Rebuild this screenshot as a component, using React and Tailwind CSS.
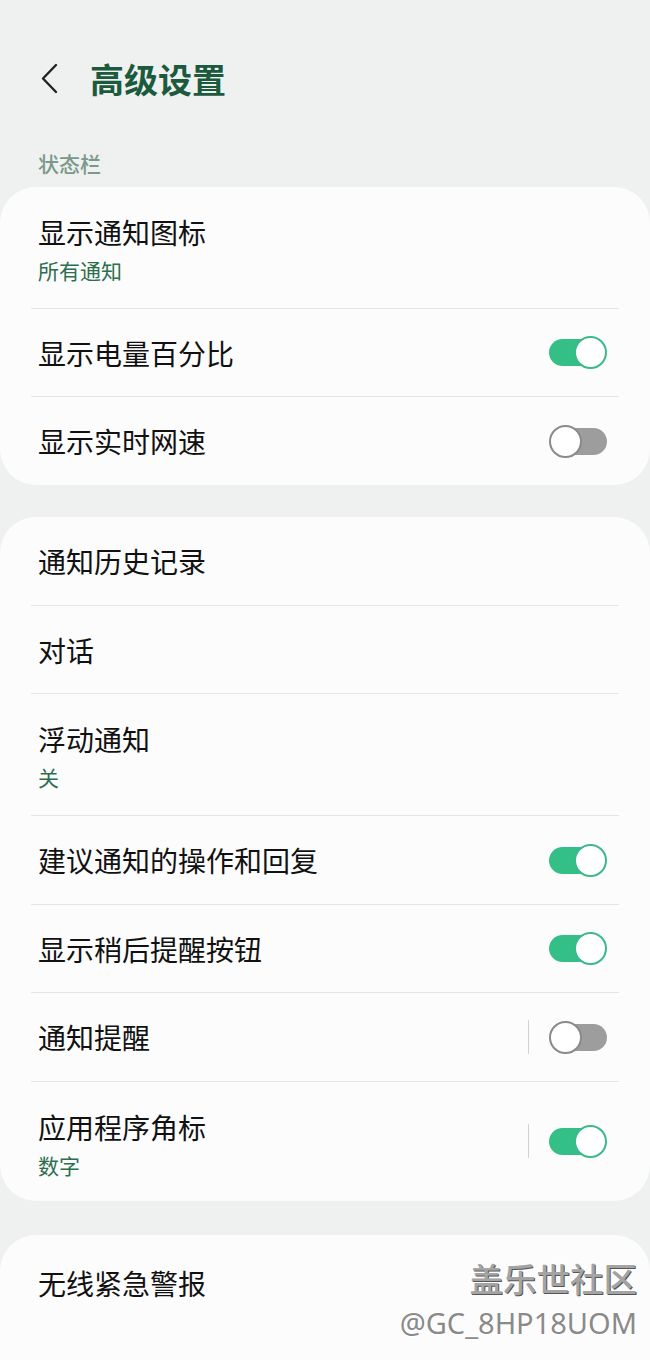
import React from "react";

const FONT = { fontFamily: '"Noto Sans CJK SC", "Noto Sans", sans-serif' };

function Toggle({ on }) {
  return (
    <div className="relative w-[58px] h-[33px] shrink-0">
      <div
        className={
          on
            ? "absolute left-0 right-[2px] top-[3px] h-[27px] rounded-full bg-[#33bf86]"
            : "absolute left-[2px] right-0 top-[3px] h-[27px] rounded-full bg-[#9d9d9d]"
        }
      />
      <div
        className={
          on
            ? "absolute right-0 top-0 w-[33px] h-[33px] rounded-full bg-white border-2 border-[#3cb98a]"
            : "absolute left-0 top-0 w-[33px] h-[33px] rounded-full bg-white border-2 border-[#8a8a8a]"
        }
      />
    </div>
  );
}

function Divider() {
  return <div className="mx-[31px] h-px bg-[#e4e6e5]" />;
}

function Row({ title, sub, toggle, sep, h = "h-[87px]" }) {
  if (sub) {
    return (
      <div className={`flex items-start justify-between pl-[38px] pr-[43px] pt-[28px] ${h}`}>
        <div className="flex flex-col">
          <span className="text-[28px] leading-[34px] text-[#111]">{title}</span>
          <span className="mt-[8px] text-[21px] leading-[26px] text-[#2c6e4e]">{sub}</span>
        </div>
        {toggle !== undefined && (
          <div className="flex items-center h-[62px]">
            {sep && <div className="w-[1.5px] h-[34px] bg-[#d2d2d2] mr-[20px]" />}
            <Toggle on={toggle} />
          </div>
        )}
      </div>
    );
  }
  return (
    <div className={`flex items-center justify-between pl-[38px] pr-[43px] ${h}`}>
      <span className="text-[28px] leading-[34px] text-[#111]">{title}</span>
      {toggle !== undefined && (
        <div className="flex items-center">
          {sep && <div className="w-[1.5px] h-[34px] bg-[#d2d2d2] mr-[20px]" />}
          <Toggle on={toggle} />
        </div>
      )}
    </div>
  );
}

export default function App() {
  return (
    <div className="relative w-[650px] h-[1360px] overflow-hidden bg-[#eef1f0]" style={FONT}>
      {/* header */}
      <div className="flex items-center h-[42px] mt-[58px]">
        <svg width="20" height="32" viewBox="0 0 20 32" className="ml-[39px]">
          <polyline points="17,2 4,15.5 17,29" fill="none" stroke="#222" strokeWidth="2.4" strokeLinecap="round" strokeLinejoin="round" />
        </svg>
        <span className="ml-[31px] text-[34px] leading-[42px] font-bold text-[#1b5a3d]">高级设置</span>
      </div>

      <div className="mt-[50px] pl-[38px] text-[21px] leading-[26px] font-medium text-[#7a998a]">状态栏</div>

      <div className="mt-[11px] bg-[#fcfcfc] rounded-[36px]">
        <Row title="显示通知图标" sub="所有通知" h="h-[121px]" />
        <Divider />
        <Row title="显示电量百分比" toggle={true} />
        <Divider />
        <Row title="显示实时网速" toggle={false} h="h-[88px]" />
      </div>

      <div className="mt-[32px] bg-[#fcfcfc] rounded-[36px]">
        <Row title="通知历史记录" h="h-[88px]" />
        <Divider />
        <Row title="对话" />
        <Divider />
        <Row title="浮动通知" sub="关" h="h-[121px]" />
        <Divider />
        <Row title="建议通知的操作和回复" h="h-[88px]" toggle={true} />
        <Divider />
        <Row title="显示稍后提醒按钮" toggle={true} />
        <Divider />
        <Row title="通知提醒" toggle={false} sep h="h-[88px]" />
        <Divider />
        <Row title="应用程序角标" sub="数字" toggle={true} sep h="h-[119px]" />
      </div>

      <div className="mt-[34px] bg-[#fcfcfc] rounded-t-[36px] h-[140px]">
        <div className="flex items-center h-[96px] pl-[38px]">
          <span className="text-[28px] leading-[34px] text-[#111]">无线紧急警报</span>
        </div>
      </div>

      {/* watermark */}
      <div className="absolute right-[13px] top-[1258px] flex flex-col items-end">
        <span className="text-[33.5px] leading-[40px] font-medium text-[#a4a4a4] [text-shadow:1px_1px_0_#555,-1px_-1px_0_#fff]">盖乐世社区</span>
        <span
          className="mt-[8px] text-[29px] leading-[34px] text-[#8a8a8a] [text-shadow:1px_1px_0_#fff,-1px_-1px_0_#fff,1px_-1px_0_#fff,-1px_1px_0_#fff]"
          style={{ fontFamily: '"Noto Sans", sans-serif' }}
        >
          @GC_8HP18UOM
        </span>
      </div>
    </div>
  );
}
